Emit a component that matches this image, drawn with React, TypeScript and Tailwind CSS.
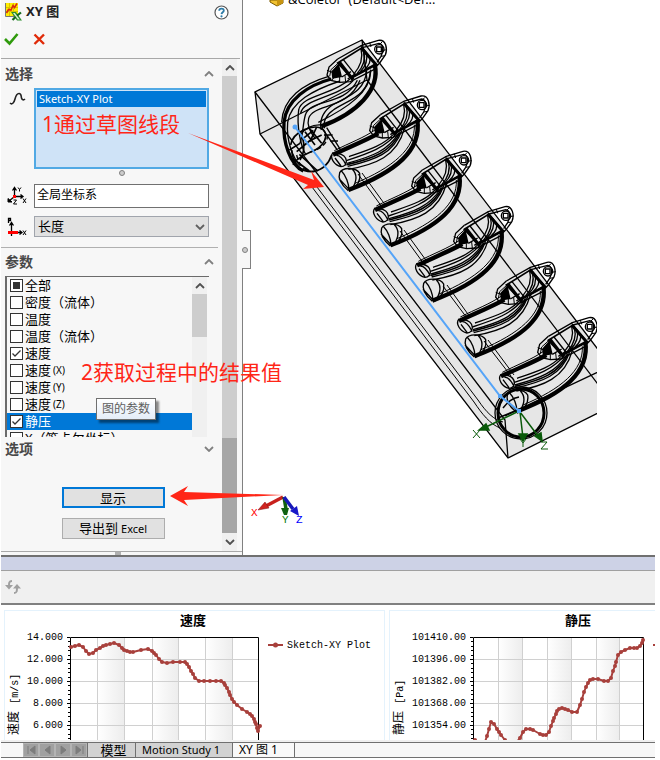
import React from "react";

const UI = "font-['Noto_Sans','Noto_Sans_CJK_SC',sans-serif]";

type Point = [number, number];

const parameters: { name: string; suffix?: string; state: "none" | "on" | "mixed"; selected?: boolean }[] = [
  { name: "全部", state: "mixed" },
  { name: "密度（流体）", state: "none" },
  { name: "温度", state: "none" },
  { name: "温度（流体）", state: "none" },
  { name: "速度", state: "on" },
  { name: "速度", suffix: "(X)", state: "none" },
  { name: "速度", suffix: "(Y)", state: "none" },
  { name: "速度", suffix: "(Z)", state: "none" },
  { name: "静压", state: "on", selected: true },
  { name: "X（笛卡尔坐标）", state: "none" },
];

function Chevron({ up = false, className = "" }: { up?: boolean; className?: string }) {
  return (
    <svg width="10" height="6" viewBox="0 0 10 6" className={className} aria-hidden="true">
      <path d={up ? "M1 5L5 1L9 5" : "M1 1L5 5L9 1"} fill="none" stroke="currentColor" strokeWidth="1.800" />
    </svg>
  );
}

function SectionHeader({ title, open, className }: { title: string; open: boolean; className: string }) {
  return (
    <button type="button" className={`flex w-full items-center justify-between pl-1 pr-[7px] text-[14px] font-bold leading-5 text-[#484848] ${className}`}>
      <span>{title}</span>
      <Chevron up={open} className="text-[#808080]" />
    </button>
  );
}

function PlotIcon() {
  return (
    <svg width="17" height="18" viewBox="0 0 17 18" aria-hidden="true">
      <rect x="0" y="0" width="13" height="13" fill="#ffee00" />
      <path d="M4.500 0V13M8.500 0V13M0 4.500H13M0 8.500H13" stroke="#d8c400" strokeWidth="1" />
      <path d="M.5 0V13.500H9" fill="none" stroke="#777" />
      <path d="M1.500 10L3.500 6.500L6 7L8 2.500L9.500 4.500L12 .5" fill="none" stroke="#d92a12" strokeWidth="1.600" />
      <path d="M6 9H11L17 17.500H12Z" fill="#2f8f2f" />
      <path d="M16 9.500L11.500 13L7.500 17" fill="none" stroke="#17691c" strokeWidth="2.200" />
      <path d="M8 10H9.800L14.800 16.500H12.900Z" fill="#d8f3d0" />
    </svg>
  );
}

function AxesIcon() {
  return (
    <svg width="20" height="20" viewBox="0 0 20 20" fill="none" stroke="#000" aria-hidden="true">
      <path d="M7.500 10V2M5.500 4.500L7.500 1.500L9.500 4.500M8 10.500H16M13.500 8.500L16 10.500L13.500 12.500M7 11L2 15" strokeWidth="1.300" />
      <path d="M1 12.500V16H5Z" fill="#000" />
      <rect x="6" y="9" width="3" height="3" fill="#f00" stroke="none" />
      <path d="M11 1.500L12.500 3.500L14 1.500M12.500 3.500V5.500M16 12.500L19 17M19 12.500L16 17M6.500 14H9.500L6.500 18H10" strokeWidth="1" />
    </svg>
  );
}

function AbscissaIcon() {
  return (
    <svg width="20" height="20" viewBox="0 0 20 20" fill="none" stroke="#000" aria-hidden="true">
      <path d="M1.500 6V1.500H3.500V3.500H1.500M4.500 19V6M2.500 8.500L4.500 5.500L6.500 8.500M5 15.500H15M12.500 13.500L15 15.500L12.500 17.500" strokeWidth="1.300" />
      <path d="M16 13.500L19 18M19 13.500L16 18" />
      <rect x="1" y="14" width="10" height="3" fill="#f00" stroke="none" />
    </svg>
  );
}

function ParameterList() {
  return (
    <div className="ml-1 mr-3 flex h-[161px] overflow-hidden border-l-2 border-t border-[#6b6b6b]">
      <ul className="min-w-0 flex-1">
        {parameters.map((p, i) => (
          <li key={i} className={p.selected ? "bg-[#0078d7] text-white" : "text-black"}>
            <label className="flex h-[17px] items-center gap-[2px] whitespace-nowrap pl-[3px] text-[13px] leading-[17px]">
              <span className="relative block h-[13px] w-[13px] shrink-0">
                <input type="checkbox" defaultChecked={p.state === "on"} className="block h-[13px] w-[13px] appearance-none border border-[#333] bg-white" />
                {p.state === "mixed" && <span className="pointer-events-none absolute left-[3px] top-[3px] h-[7px] w-[7px] bg-[#333]" />}
                {p.state === "on" && (
                  <svg className="pointer-events-none absolute left-0 top-0" width="13" height="13" viewBox="0 0 13 13" aria-hidden="true">
                    <path d="M2.500 6.500L5 9L10.500 3.500" fill="none" stroke="#333" strokeWidth="1.300" />
                  </svg>
                )}
              </span>
              <span>{p.name}</span>
              {p.suffix && <span className="text-[10px]">{p.suffix}</span>}
            </label>
          </li>
        ))}
      </ul>
      <div className="mr-[2px] flex w-[15px] flex-col items-center bg-[#f0f0f0]">
        <div className="flex h-[17px] items-center">
          <Chevron up className="text-[#505050]" />
        </div>
        <div className="h-[43px] w-full bg-[#cdcdcd]" />
      </div>
    </div>
  );
}

function PropertyPanel() {
  return (
    <aside className={`relative flex w-[242px] shrink-0 flex-col border-r border-[#808080] bg-[#f7f7f7] ${UI}`}>
      <div className="flex h-6 items-center justify-between pl-1 pr-[13px]">
        <h1 className="flex items-center gap-1 text-[13px] font-bold text-[#222]">
          <PlotIcon />
          XY 图
        </h1>
        <button type="button" aria-label="帮助" className="flex">
          <svg width="15" height="15" viewBox="0 0 15 15" aria-hidden="true">
            <circle cx="7.500" cy="7.500" r="6.500" fill="#fff" stroke="#555" strokeWidth="1.200" />
            <path d="M5.200 5.800C5.200 2.800 9.900 2.900 9.800 5.600C9.700 7.200 7.600 7.300 7.500 9.100" fill="none" stroke="#2e7ba6" strokeWidth="1.800" />
            <circle cx="7.500" cy="11.300" r="1.100" fill="#2e7ba6" />
          </svg>
        </button>
      </div>
      <div className="mr-[2px] flex h-[35px] items-center gap-[14px] border-b border-[#a8a8a8] pb-1 pl-[3px]">
        <button type="button" aria-label="确定">
          <svg width="15" height="14" viewBox="0 0 15 14" aria-hidden="true">
            <path d="M1 7L5.500 11.500L13.500 2" fill="none" stroke="#2f9a0c" strokeWidth="2.600" />
          </svg>
        </button>
        <button type="button" aria-label="取消">
          <svg width="13" height="14" viewBox="0 0 13 14" aria-hidden="true">
            <path d="M1.500 2.500L11 12M11 2.500L1.500 12" fill="none" stroke="#e02a08" strokeWidth="2.400" />
          </svg>
        </button>
      </div>

      <div className="flex flex-1 pr-[5px]">
        <div className="flex min-w-0 flex-1 flex-col pr-px">
          <SectionHeader title="选择" open className="h-[29px]" />
          <div className="flex pr-3">
            <div className="w-[33px] shrink-0 pl-2 pt-1">
              <svg width="17" height="14" viewBox="0 0 17 14" aria-hidden="true">
                <path d="M1 11C3 13 5 11 6 7C7 3 8 1.500 10 1.500C12.500 1.500 12 4 12.500 6C13 8 14.500 8.500 16 7" fill="none" stroke="#222" strokeWidth="1.600" />
              </svg>
            </div>
            <ul className="h-[81px] min-w-0 flex-1 border-2 border-[#51a9e4] bg-[#cfe3f7] p-px">
              <li className="h-4 bg-[#0078d7] pl-[2px] text-[11px] leading-4 text-white">Sketch-XY Plot</li>
            </ul>
          </div>
          <div className="flex h-[15px] justify-center pl-[21px] pt-px">
            <span className="h-[6px] w-[6px] rounded-full border border-[#808080] bg-[#ccc]" />
          </div>
          <label className="flex items-center pr-3">
            <span className="w-[33px] shrink-0 pl-[6px]"><AxesIcon /></span>
            <input aria-label="坐标系" defaultValue="全局坐标系" className="h-6 min-w-0 flex-1 border border-[#707070] bg-white pb-1 pl-[2px] text-[12px] text-black" />
          </label>
          <label className="mt-2 flex items-center pr-3">
            <span className="w-[33px] shrink-0 pl-[6px]"><AbscissaIcon /></span>
            <span className="relative flex min-w-0 flex-1">
              <select aria-label="横坐标" className="h-[21px] w-full appearance-none border border-[#a0a4ac] bg-[#e1e1e1] pb-px pl-[3px] text-[13px] leading-[18px] text-black">
                <option>长度</option>
              </select>
              <Chevron className="pointer-events-none absolute right-1 top-2 text-[#606060]" />
            </span>
          </label>
          <div className="mr-[3px] mt-[10px] h-px bg-[#b0b0b0]" />
          <SectionHeader title="参数" open className="h-7" />
          <ParameterList />
          <SectionHeader title="选项" open={false} className="h-[23px]" />
          <div className="flex flex-col items-center gap-[10px] pb-3 pl-1 pt-[27px] text-[12px] text-black">
            <button type="button" className="h-[21px] w-[103px] border-2 border-[#0078d7] bg-[#e1e1e1] text-[13px] leading-4">显示</button>
            <button type="button" className="h-[21px] w-[103px] border border-[#adadad] bg-[#e1e1e1] leading-4">
              <span className="text-[13px]">导出到</span> <span className="text-[11px]">Excel</span>
            </button>
          </div>
        </div>
        <div className="flex w-[15px] flex-col items-center bg-[#f0f0f0] text-[#505050]">
          <div className="flex h-[17px] items-center"><Chevron up /></div>
          <div className="w-full flex-1 bg-[#cdcdcd]" />
          <div className="h-[95px] w-full bg-[#a6a6a6]" />
          <div className="flex h-[18px] items-center"><Chevron /></div>
        </div>
      </div>
      <div className="flex h-[4px] justify-center border-t border-[#a8a8a8] pr-2">
        <span className="h-[3px] w-[6px] bg-[#b0b0b0]" />
      </div>
      <div className="absolute -right-[9px] top-[230px] flex h-[39px] w-[9px] items-center border border-l-0 border-[#808080] bg-[#f7f7f7]">
        <span className="h-[6px] w-[6px] rounded-full border border-[#808080] bg-[#ccc]" />
      </div>
    </aside>
  );
}

/* Bolted flange at the top of one runner, on a grid three times finer than the view. */
function Flange() {
  return (
    <g>
      <path d="M166 86L240 40L281 90L207 130Z" strokeWidth="5" />
      <path d="M166 74L238 33L288 18C312 14 316 45 309 62L292 86L278 100M240 40L290 27C304 28 304 50 296 66L284 84" strokeWidth="4" />
      <path d="M262 25L266 38M300 22L292 30M314 46L302 48M308 64L296 66M236 33L240 46" />
      <circle cx="291" cy="45" r="14" strokeWidth="4" />
      <path d="M283 38H297V52H283Z" strokeWidth="4" />
      <path d="M166 74L140 98L134 122L146 138L172 144L204 142L282 102" strokeWidth="4" />
      <path d="M168 86L146 106L142 126M172 92L152 112M134 108L150 114M148 138L160 124M172 144V128M190 143L188 124" />
      <path d="M150 112L168 92L176 126L152 130Z" fill="#000" strokeWidth="5" />
      <path d="M170 82L212 136" strokeWidth="10" />
      <path d="M183 76L221 124M178 128L206 112M196 134L220 118" strokeWidth="4" />
      <path d="M236 44C242 66 238 92 214 120M244 48C250 70 246 94 224 118M252 54C257 74 253 92 234 112M262 68C266 80 262 92 246 106" strokeWidth="4" />
      <path d="M236 40L284 94" strokeWidth="9" />
      <path d="M207 130L281 90" strokeWidth="8" />
    </g>
  );
}

function Runner() {
  return (
    <g>
      <Flange />
      <path d="M160 130C125 150 80 168 24 194" strokeWidth="13" />
      <path d="M150 120C115 144 75 158 28 182" />
      <path d="M24 188C12 202 28 226 48 230C70 230 72 196 38 190M34 196C50 196 58 214 64 226M30 204L48 228" strokeWidth="4" />
      <path d="M216 128C184 172 132 190 64 212M222 128C190 182 140 200 66 220M230 122C206 190 150 210 68 229M238 116C216 200 150 224 70 238M204 134C176 166 130 180 72 200" strokeWidth="4" />
      <path d="M226 126C198 186 145 205 66 224" strokeWidth="5" />
      <path d="M277 90C290 180 215 245 70 300" strokeWidth="13" />
      <path d="M268 104C272 176 204 232 90 280" />
      <path d="M70 302C50 285 38 265 44 248C54 230 94 232 104 250C108 274 96 290 76 302M42 266L76 302M82 238C100 256 94 276 82 296M50 244C62 256 72 280 72 300" strokeWidth="4" />
    </g>
  );
}

const runnerOffsets: Point[] = [[0, 0], [126, 166], [252, 332], [378, 499], [504, 665]];

function FirstRunner() {
  return (
    <g>
      <g transform="translate(97 -2)"><Flange /></g>
      <path d="M244 132C175 150 108 195 102 262C98 320 120 390 160 408" strokeWidth="10" />
      <path d="M236 124C160 146 98 190 95 262M270 138C190 165 122 200 113 262C108 320 130 370 150 392" strokeWidth="4" />
      <path d="M300 132C250 180 155 180 146 225C140 270 150 330 168 360M310 136C262 190 160 190 152 235" strokeWidth="4" />
      <path d="M322 136C285 215 180 190 166 240C158 270 160 295 150 325M330 136C295 225 190 205 176 250C170 270 180 290 195 310" strokeWidth="4" />
      <path d="M350 106C345 175 285 185 240 215C215 235 208 262 214 285M362 104C355 190 290 195 250 225C228 240 218 262 224 280" strokeWidth="4" />
      <path d="M374 88C392 165 320 235 214 274" strokeWidth="13" />
      <path d="M362 110C360 170 300 215 205 262M214 270C190 268 170 275 150 300" strokeWidth="4" />
      <path d="M122 330C128 290 190 265 218 282C238 300 225 335 180 352C155 362 130 380 130 390" strokeWidth="5" />
      <path d="M165 290L195 330M180 282L215 325M200 276L180 320M160 310L190 286M150 290C165 320 165 350 150 375M118 345L150 325M140 350L178 318L215 300" strokeWidth="5" />
      <path d="M216 280L262 345M230 278L275 350M222 300L248 300M240 318L264 318" strokeWidth="4" />
      <path d="M130 372L178 408M148 358L200 405M125 345C128 385 150 412 190 410C215 405 235 390 245 360" strokeWidth="5" />
      <path d="M140 360C148 395 168 418 205 406M180 352C215 342 235 322 232 300" strokeDasharray="14 8" strokeWidth="4" />
    </g>
  );
}

function ModelView() {
  return (
    <svg width="412" height="555" viewBox="243 0 412 555" className="block shrink-0" role="img" aria-label="模型视图">
      <defs>
        <clipPath id="modelClip"><rect x="243" y="0" width="354" height="555" /></clipPath>
      </defs>
      <path d="M270 0H283V3L277 6L270 2Z" fill="#f2c230" stroke="#7a5a00" strokeWidth="1" />
      <path d="M277 0V6L283 3V0Z" fill="#c99510" />
      <text x="288" y="4" fontSize="13" className="font-['Open_Sans',sans-serif]" xmlSpace="preserve">&amp;Coletor  (Default&lt;Def...</text>
      <g clipPath="url(#modelClip)">
        <path d="M255 92L362 40L597 348V414L508 458L260 134Z" fill="#e6e6e6" />
        <g fill="none" stroke="#000" strokeWidth="1.300">
          <path d="M600 352L362 40L255 92L260 134L508 458L600 412" />
          <path d="M255 92L505 420L508 458M505 416L600 371M362 40L367 80L260 134M367 80L600 387" />
          <path d="M312 187L474 402C482 414 490 424 500 428M317 187L478 400C486 412 494 420 503 422" strokeWidth="1" />
          <path d="M358 174L382 207M362 173L386 206M400 231L424 264M404 230L428 263M443 286L467 318M447 285L470 317M484 341L511 376M488 340L514 375" strokeWidth="1" />
        </g>
        <g fill="none" stroke="#000" strokeWidth="3" transform="translate(240 0) scale(.33333)">
          <g transform="translate(30 105)"><FirstRunner /></g>
          {runnerOffsets.map(([x, y]) => (
            <g key={x} transform={`translate(${x + 255} ${y + 270})`}><Runner /></g>
          ))}
        </g>
        <g fill="none" stroke="#000">
          <ellipse cx="521" cy="413" rx="23" ry="24" strokeWidth="3" />
          <ellipse cx="521" cy="413" rx="26" ry="26" strokeWidth="1.300" />
          <path d="M503 408C508 402 512 398 519 397M498 418L520 409" strokeWidth="1.500" />
        </g>
      </g>
      <g stroke="#0a5a0a" fill="#0a5a0a" strokeWidth="1.500">
        <path d="M519 411L486 427M520 412L523 438M520 412L538 436" fill="none" />
        <path d="M479 430L486 424L489 430ZM519 434H527L523 441ZM535 436L541 433L542 441Z" />
      </g>
      <path d="M473 430L480 438M480 430L473 438M520 439L523 443L526 439M523 443V447M541 442H547L541 449H548" fill="none" stroke="#0a5a0a" />
      <path d="M295 127L500 396L519 411" fill="none" stroke="#55a4f8" strokeWidth="2" />
      <circle cx="295" cy="127" r="2.500" fill="#55a4f8" />
      <path d="M498 394H502V398H498ZM517 409H521V413H517Z" fill="#55a4f8" />
      <g strokeWidth="3.500">
        <path d="M283 497L266 506" stroke="#c8201c" />
        <path d="M284 497L286 509" stroke="#106010" />
        <path d="M284 497L293 509" stroke="#1818b8" />
      </g>
      <path d="M258 510L265 502L269 508Z" fill="#d02420" stroke="#801010" strokeWidth=".5" />
      <path d="M281 508L289 508L287 515L284 515Z" fill="#106010" />
      <path d="M290 511L297 506L299 516Z" fill="#1818c8" />
      <g fontSize="11" className="font-['Liberation_Mono',monospace]">
        <text x="251" y="516" fill="#f00">X</text>
        <text x="282" y="523" fill="#0a7a0a">Y</text>
        <text x="296" y="523" fill="#00f">Z</text>
      </g>
    </svg>
  );
}

interface ChartProps {
  id: string;
  title: string;
  unit: string;
  ticks: string[];
  left: number;
  right: number;
  titleX: number;
  unitX: number;
  columns: number[];
  points: Point[];
}

function Chart({ id, title, unit, ticks, left, right, titleX, unitX, columns, points }: ChartProps) {
  return (
    <figure className="h-[130px] w-[381px] shrink-0 overflow-hidden border border-b-0 border-[#e4f2fc] bg-white">
      <svg width="379" height="129" viewBox="0 0 379 129" role="img" aria-label={title} className="block font-['Liberation_Mono','Noto_Sans_CJK_SC',monospace]">
        <defs>
          <linearGradient id={id}><stop offset="0" stopColor="#fff" /><stop offset="1" stopColor="#ededed" /></linearGradient>
        </defs>
        {columns.map((x, i) => (i % 2 === 0 && i + 1 < columns.length ? <rect key={x} x={x} y="26" width={columns[i + 1] - x} height="103" fill={`url(#${id})`} /> : null))}
        <g stroke="#d0d0d0">
          {columns.map((x) => <line key={x} x1={x + 0.5} x2={x + 0.5} y1="26" y2="129" />)}
          {[48.5, 70.5, 92.5, 114.5].map((y) => <line key={y} x1={left} x2={right} y1={y} y2={y} />)}
        </g>
        <path d={`M${left + 0.5} 129V26.5H${right + 0.5}V129`} fill="none" stroke="#000" />
        <g stroke="#000">
          {Array.from({ length: 24 }, (_, i) => {
            const y = Math.round(26 + i * 4.4) + 0.5;
            return <line key={i} x1={left - (i % 5 === 0 ? 3 : 2)} x2={left} y1={y} y2={y} />;
          })}
        </g>
        <polyline points={points.map((p) => p.join(",")).join(" ")} fill="none" stroke="#a8403c" strokeWidth="2" strokeLinejoin="round" />
        {points.map(([x, y]) => <circle key={`${x}-${y}`} cx={x} cy={y} r="2" fill="#a8403c" />)}
        <text x={titleX} y="14" fontSize="13" fontWeight="bold" textAnchor="middle">{title}</text>
        <g fontSize="10" textAnchor="end">
          {ticks.map((t, i) => <text key={t} x={left - 7} y={29 + i * 22}>{t}</text>)}
        </g>
        <text transform={`translate(${unitX} 124) rotate(-90)`} fontSize="12">
          {title} <tspan fontSize="10">{unit}</tspan>
        </text>
        <line x1={right + 10} x2={right + 25} y1="34" y2="34" stroke="#a8403c" strokeWidth="2" />
        <circle cx={right + 17.5} cy="34" r="2.500" fill="#a8403c" />
        {right + 29 < 280 + 10 && id === "velocityBand" && <text x={right + 29} y="37" fontSize="10">Sketch-XY Plot</text>}
      </svg>
    </figure>
  );
}

const velocityCurve: Point[] = [
  [66, 36], [70, 35], [74, 34], [78, 36], [81, 40], [84, 43], [88, 42], [91, 39], [95, 37], [98, 35], [101, 34], [105, 33], [109, 32], [114, 34], [117, 37],
  [119, 39], [122, 40], [125, 41], [128, 41], [136, 39], [143, 38], [147, 40], [149, 42], [151, 44], [154, 48], [157, 51], [162, 52], [168, 51], [175, 51], [180, 51], [182, 53], [184, 56], [186, 60], [188, 63],
  [190, 67], [194, 70], [199, 70], [205, 70], [211, 70], [216, 70], [219, 72], [220, 74], [222, 77], [224, 81], [225, 84], [227, 88], [229, 91], [232, 94], [237, 98], [242, 101], [245, 103], [247, 105], [249, 108],
  [250, 111], [251, 113], [252, 117], [253, 120], [255, 115],
];

const pressureCurve: Point[] = [
  [85, 129], [88, 131], [95, 131], [97, 125], [99, 118], [101, 111], [104, 113], [107, 118], [109, 121], [111, 124], [115, 129], [120, 133], [126, 132], [130, 127],
  [133, 121], [136, 118], [140, 118], [143, 119], [150, 123], [153, 124], [156, 124], [159, 121], [161, 115], [163, 110], [164, 107], [166, 103], [167, 100], [169, 98], [172, 97], [175, 98], [178, 99], [182, 101],
  [187, 101], [190, 94], [192, 88], [194, 81], [196, 76], [198, 72], [200, 69], [203, 68], [208, 68], [214, 70], [218, 70], [221, 67], [223, 60], [225, 55], [226, 51], [228, 44], [231, 41],
  [235, 39], [240, 37], [244, 37], [247, 37], [250, 35], [252, 32], [253, 29],
];

function TabBar() {
  const tab = "flex items-center whitespace-nowrap border-r border-[#707070]";
  return (
    <nav className={`flex h-4 border-y border-[#707070] bg-[#f7f7f7] pl-[22px] text-[12px] leading-[14px] text-black ${UI}`}>
      <div className="flex border-r border-[#707070] bg-[#a0a0a0]">
        {["M3 2V10M10 2L5 6L10 10Z", "M9 2L4 6L9 10Z", "M4 2L9 6L4 10Z", "M10 2V10M3 2L8 6L3 10Z"].map((d, i) => (
          <button key={i} type="button" aria-label={["首个", "上一个", "下一个", "最后"][i]} className="flex w-4 items-center justify-center border border-[#b4b4b4]">
            <svg width="13" height="12" viewBox="0 0 13 12" aria-hidden="true"><path d={d} fill="#7c7c7c" stroke="#7c7c7c" /></svg>
          </button>
        ))}
      </div>
      <button type="button" className={`${tab} w-[48px] justify-center bg-[#d2d2d2] pl-1 text-[13px]`}>模型</button>
      <button type="button" className={`${tab} w-[97px] bg-[#d2d2d2] pl-[6px] text-[11px]`}>Motion Study 1</button>
      <button type="button" className={`${tab} w-[62px] bg-[#f9f9f9] pl-[6px] text-[12px]`}>XY 图 1</button>
    </nav>
  );
}

export default function App() {
  return (
    <div className="relative overflow-hidden bg-white pb-[2px] pl-px pr-[5px]">
      <div className="flex">
        <PropertyPanel />
        <main className="min-w-0 flex-1 overflow-hidden bg-white"><ModelView /></main>
      </div>
      <div className="h-4 border-b border-t-2 border-b-[#a0a0a0] border-t-[#707070] bg-[#cdd2e6]" />
      <div className="flex h-[34px] items-center border-b-2 border-[#808080] bg-[#f0f0f0] pl-1">
        <button type="button" aria-label="刷新">
          <svg width="16" height="14" viewBox="0 0 16 14" aria-hidden="true">
            <path d="M7 1C4 1 4 3 4 6M9 13C12 13 12 11 12 7" fill="none" stroke="#a0a0a0" strokeWidth="2" />
            <path d="M0 5H8L4 9.500ZM8 8.500L12 4L16 8.500Z" fill="#a0a0a0" />
          </svg>
        </button>
      </div>
      <section className="flex gap-1 overflow-hidden bg-white pl-[3px] pt-[5px]">
        <Chart id="velocityBand" title="速度" unit="[m/s]" ticks={["14.000", "12.000", "10.000", "8.000", "6.000"]} left={65} right={253} titleX={188} unitX={13} columns={[92, 119, 147, 173, 200, 227]} points={velocityCurve} />
        <Chart id="pressureBand" title="静压" unit="[Pa]" ticks={["101410.00", "101396.00", "101382.00", "101368.00", "101354.00"]} left={83} right={253} titleX={188} unitX={13} columns={[108, 132, 157, 181, 206, 229]} points={pressureCurve} />
      </section>
      <div className="h-[2px] bg-[#f0f0f0]" />
      <TabBar />

      <span className={`absolute left-[42px] top-[109px] whitespace-nowrap text-[21px] leading-[30px] text-[#ff2617] ${UI}`}>1通过草图线段</span>
      <span className={`absolute left-[81px] top-[357px] whitespace-nowrap text-[21px] leading-[30px] text-[#ff2617] ${UI}`}>2获取过程中的结果值</span>
      <div role="tooltip" className={`absolute left-[96px] top-[398px] border border-[#707070] bg-gradient-to-b from-white to-[#e4edf8] px-[5px] text-[12px] leading-[20px] text-[#606060] shadow-[3px_3px_2px_rgba(0,0,0,0.45)] ${UI}`}>图的参数</div>
      <svg className="pointer-events-none absolute left-0 top-0" width="340" height="520" viewBox="0 0 340 520" aria-hidden="true">
        <path d="M188 133L314 180L311 171L324 187L303 189L308 185ZM283 495L184 492L188 486L170 496L188 506L184 500Z" fill="#ff2617" />
      </svg>
    </div>
  );
}
